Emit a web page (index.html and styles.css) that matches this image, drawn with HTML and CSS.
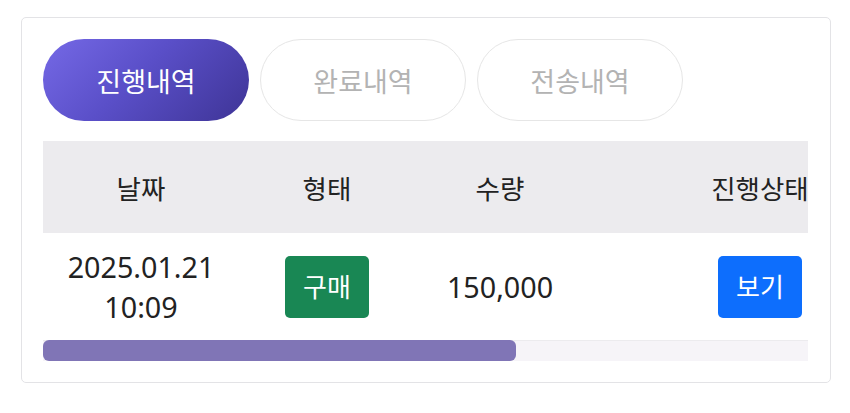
FILE: index.html
```html
<!DOCTYPE html>
<html lang="ko">
<head>
<meta charset="utf-8">
<link rel="stylesheet" href="styles.css">
</head>
<body>
<div class="card">
  <div class="tabs">
    <button class="tab active">진행내역</button>
    <button class="tab">완료내역</button>
    <button class="tab">전송내역</button>
  </div>
  <div class="table-wrap">
    <table class="list">
      <thead>
        <tr>
          <th class="c1">날짜</th>
          <th class="c2">형태</th>
          <th class="c3">수량</th>
          <th class="c4">진행상태</th>
          <th class="c5"></th>
        </tr>
      </thead>
      <tbody>
        <tr>
          <td class="date">2025.01.21<br>10:09</td>
          <td><span class="badge buy">구매</span></td>
          <td>150,000</td>
          <td><span class="badge view">보기</span></td>
          <td></td>
        </tr>
      </tbody>
    </table>
  </div>
  <div class="scrollbar"><div class="thumb" style="width: 473px"></div></div>
</div>
</body>
</html>
```
FILE: styles.css
```css
html, body {
  margin: 0;
  padding: 0;
  background: #ffffff;
}
body {
  padding: 17px 0 0 21px;
  font-family: "Noto Sans", "Noto Sans CJK KR", sans-serif;
  color: #212529;
}
.card {
  width: 766px;
  border: 1px solid #e3e3e6;
  border-radius: 5px;
  padding: 21px 21px 21px 21px;
}
.tabs {
  display: flex;
  gap: 11px;
  margin-bottom: 20px;
}
.tab {
  width: 206px;
  height: 82px;
  border-radius: 41px;
  border: 1px solid #e6e6e6;
  background: #ffffff;
  color: #b3b3b3;
  font-family: "Noto Sans CJK KR", "Noto Sans", sans-serif;
  font-size: 27px;
  padding: 0;
}
.tab.active {
  border: none;
  color: #ffffff;
  background: linear-gradient(135deg, #7569e6 0%, #5a4fc8 45%, #3e3496 100%);
}
.table-wrap {
  width: 765px;
  overflow: hidden;
}
.scrollbar {
  width: 765px;
  height: 21px;
  background: #f6f4f8;
  box-shadow: inset 0 1px 0 #ecebee;
}
.thumb {
  height: 21px;
  background: #8075b6;
  border-radius: 6px;
}
.list {
  width: 1238px;
  border-collapse: collapse;
  table-layout: fixed;
}
.list th {
  background: #ecebee;
  height: 92px;
  padding: 0;
  font-family: "Noto Sans CJK KR", "Noto Sans", sans-serif;
  font-weight: 400;
  font-size: 26.5px;
  color: #222222;
  text-align: center;
}
.c1 { width: 196px; }
.c2 { width: 176px; }
.c3 { width: 170px; }
.c4 { width: 350px; }
.list td {
  height: 107px;
  padding: 0;
  text-align: center;
  vertical-align: middle;
  font-size: 28.7px;
  line-height: 40px;
  color: #222222;
}
.badge {
  display: inline-block;
  width: 84px;
  height: 62px;
  line-height: 60px;
  border-radius: 5px;
  color: #ffffff;
  font-family: "Noto Sans CJK KR", "Noto Sans", sans-serif;
  font-size: 26px;
  vertical-align: middle;
}
.badge.buy { background: #198754; }
.badge.view { background: #0d6efd; }
```
